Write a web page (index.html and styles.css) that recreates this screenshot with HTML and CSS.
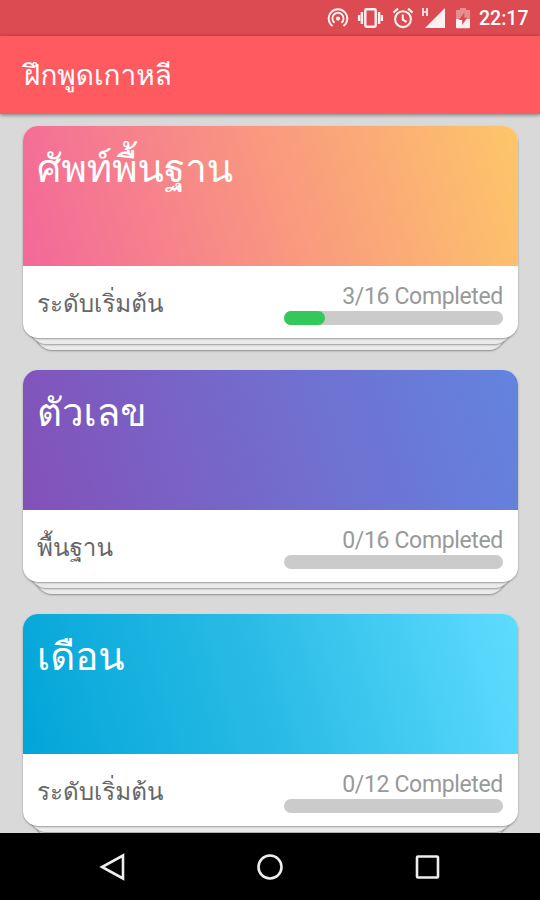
FILE: index.html
```html
<!DOCTYPE html>
<html lang="th">
<head>
  <meta charset="UTF-8">
  <meta name="viewport" content="width=device-width, initial-scale=1.0">
  <title>ฝึกพูดเกาหลี</title>
  <link rel="stylesheet" href="styles.css">
</head>
<body>

<div class="status-bar">
  <svg class="hotspot" width="22" height="22" viewBox="0 0 22 22" fill="none" stroke="#fff" stroke-width="1.9">
    <path d="M5.600 19.100A9.300 9.300 0 1 1 16.400 19.100"/>
    <path d="M7.600 15.800A5.600 5.600 0 1 1 14.400 15.800"/>
    <circle cx="11" cy="11.600" r="2.100" fill="#fff" stroke="none"/>
  </svg>
  <svg class="vibrate" width="27" height="22" viewBox="0 0 27 22" fill="none" stroke="#fff" stroke-width="2.4">
    <rect x="8.300" y="2.200" width="10.400" height="17.600" rx="1.200"/>
    <path d="M4.900 5v12M22.100 5v12M2.100 8v6M24.900 8v6"/>
  </svg>
  <svg class="alarm" width="22" height="22" viewBox="0 0 22 22" fill="none" stroke="#fff" stroke-width="2.1">
    <circle cx="11" cy="12.200" r="7.900"/>
    <path d="M1.400 5.600l4.600-4M20.600 5.600l-4.600-4M10.800 7.400v5.200l3.800 2.400"/>
  </svg>
  <svg class="signal" width="25" height="22" viewBox="0 0 25 22">
    <path d="M24 1v20H4z" fill="#fff"/>
    <path d="M2 1v8M6 1v8M2 5h4" fill="none" stroke="#fff" stroke-width="1.7"/>
  </svg>
  <svg class="battery" width="14" height="22" viewBox="0 0 14 22">
    <path d="M4 1h6v2h4v9H0V3h4z" fill="#fff" fill-opacity=".4"/>
    <path d="M0 12h14v8.200a1 1 0 0 1-1 1H1a1 1 0 0 1-1-1z" fill="#fff"/>
    <path d="M8.300 5.500L2.800 13h3.400v5l5-7.300H8.300z" fill="#db4b51"/>
  </svg>
  <span class="clock">22:17</span>
</div>

<header class="app-bar">
  <h1>ฝึกพูดเกาหลี</h1>
</header>

<main class="deck-list">
  <div class="deck">
    <div class="card">
      <div class="cover pink"><h2>ศัพท์พื้นฐาน</h2></div>
      <div class="info">
        <span class="level">ระดับเริ่มต้น</span>
        <div class="progress">
          <span class="count">3/16 Completed</span>
          <div class="bar"><div class="fill" style="width: 18.75%"></div></div>
        </div>
      </div>
    </div>
    <div class="sheet middle"></div>
    <div class="sheet last"></div>
  </div>

  <div class="deck">
    <div class="card">
      <div class="cover purple"><h2>ตัวเลข</h2></div>
      <div class="info">
        <span class="level">พื้นฐาน</span>
        <div class="progress">
          <span class="count">0/16 Completed</span>
          <div class="bar"></div>
        </div>
      </div>
    </div>
    <div class="sheet middle"></div>
    <div class="sheet last"></div>
  </div>

  <div class="deck">
    <div class="card">
      <div class="cover blue"><h2>เดือน</h2></div>
      <div class="info">
        <span class="level">ระดับเริ่มต้น</span>
        <div class="progress">
          <span class="count">0/12 Completed</span>
          <div class="bar"></div>
        </div>
      </div>
    </div>
    <div class="sheet middle"></div>
    <div class="sheet last"></div>
  </div>
</main>

<nav class="nav-bar">
  <svg width="28" height="28" viewBox="0 0 28 28"><path d="M24 2.500v23L3 14z"/></svg>
  <svg width="28" height="28" viewBox="0 0 28 28"><circle cx="14" cy="14" r="11.500"/></svg>
  <svg width="28" height="28" viewBox="0 0 28 28"><rect x="4" y="3.500" width="21" height="21" rx="1"/></svg>
</nav>

</body>
</html>
```
FILE: styles.css
```css
* {
  box-sizing: border-box;
}

body {
  margin: 0;
  height: 900px;
  display: flex;
  flex-direction: column;
  overflow: hidden;
  background-color: #d9d9d9;
  font-family: Roboto, Loma, Waree, "Noto Sans Thai Looped", "Noto Sans Thai", "Noto Sans", sans-serif;
}

h1, h2 {
  margin: 0;
  font-weight: 400;
  color: #fff;
}

.status-bar {
  flex: none;
  height: 36px;
  padding-right: 12px;
  display: flex;
  align-items: center;
  justify-content: flex-end;
  background-color: #db4b51;
}

.status-bar svg {
  opacity: 0.92;
}

.hotspot {
  margin-right: 8px;
}

.vibrate {
  margin-right: 8px;
}

.alarm {
  margin-right: 7px;
}

.signal {
  margin-right: 10px;
}

.battery {
  margin-right: 9px;
}

.clock {
  width: 49px;
  padding-top: 2px;
  color: #fff;
  font-size: 19.5px;
  font-weight: 500;
  line-height: 38px;
  white-space: nowrap;
}

.app-bar {
  flex: none;
  height: 78px;
  padding: 2px 0 0 24px;
  display: flex;
  align-items: center;
  background-color: #ff5a60;
  box-shadow: 0 1px 4px rgba(0, 0, 0, 0.45);
  z-index: 5;
}

.app-bar h1 {
  font-size: 28px;
  line-height: 40px;
}

.deck-list {
  flex: 1;
  min-height: 0;
  padding: 12px 22px 0 23px;
  overflow: hidden;
}

.deck {
  height: 244px;
}

.card {
  position: relative;
  z-index: 3;
  height: 212px;
  border-radius: 15px;
  overflow: hidden;
  background-color: #fff;
  box-shadow: 0 1px 2px rgba(0, 0, 0, 0.35);
}

.cover {
  height: 140px;
  padding: 13px 14px;
}

.cover h2 {
  font-size: 38.5px;
  line-height: 60px;
  white-space: nowrap;
}

.pink {
  background: linear-gradient(74deg, #f3689a, #f99780 50%, #fdc669);
}

.purple {
  background: linear-gradient(74deg, #8351b8, #736ccd 50%, #6284de);
}

.blue {
  background: linear-gradient(74deg, #02a5d8, #2bbce6 50%, #5fdcff);
}

.info {
  height: 72px;
  padding: 0 15px 0 14px;
  display: flex;
  justify-content: space-between;
}

.level {
  color: #666;
  font-size: 24.2px;
  line-height: 77px;
  white-space: nowrap;
}

.progress {
  width: 219px;
  padding-top: 17px;
}

.count {
  display: block;
  color: #999;
  font-size: 23px;
  line-height: 28px;
  letter-spacing: -0.35px;
  text-align: right;
  white-space: nowrap;
}

.bar {
  height: 14px;
  border-radius: 7px;
  background-color: #cbcbcb;
}

.fill {
  height: 100%;
  border-radius: 7px;
  background-color: #34c759;
}

.sheet {
  position: relative;
  height: 20px;
  background-color: #ebebeb;
  box-shadow: 0 1px 2px rgba(0, 0, 0, 0.35);
}

.middle {
  z-index: 2;
  margin: -14px 7px 0;
  border-radius: 0 0 16px 16px;
}

.last {
  z-index: 1;
  margin: -14px 13px 0;
  border-radius: 0 0 16px 16px;
}

.nav-bar {
  flex: none;
  height: 67px;
  padding: 0 99px;
  display: flex;
  align-items: center;
  justify-content: space-between;
  background-color: #000;
  z-index: 5;
}

.nav-bar svg {
  fill: none;
  stroke: #eee;
  stroke-width: 2.6;
}
```
